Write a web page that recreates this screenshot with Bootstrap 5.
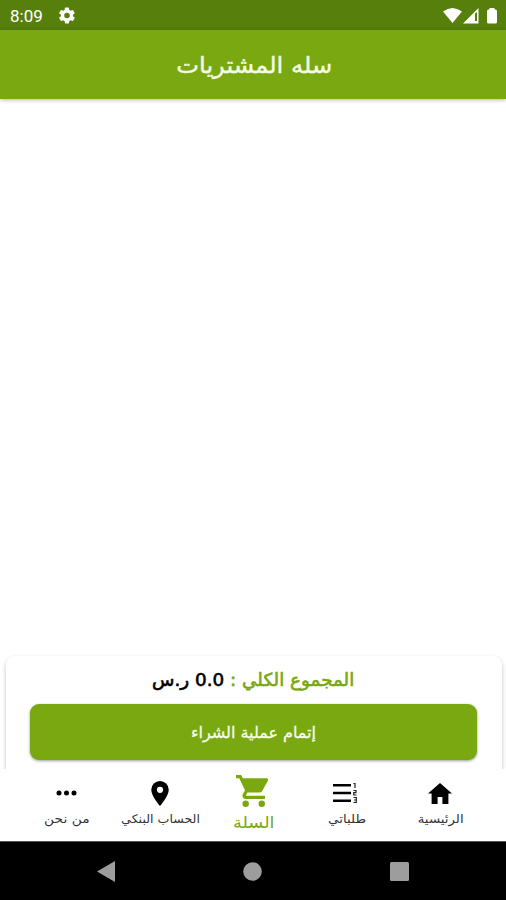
<!DOCTYPE html>
<html lang="ar" dir="rtl">
<head>
<meta charset="utf-8">
<meta name="viewport" content="width=device-width, initial-scale=1">
<title>سله المشتريات</title>
<link href="https://cdn.jsdelivr.net/npm/bootstrap@5.3.0/dist/css/bootstrap.min.css" rel="stylesheet">
<style>
:root{--leaf:#79a811;--leaf-dark:#577f0b}
body{font-family:"DejaVu Sans",sans-serif;background:#fff;line-height:1}
svg{display:block;flex:none}
.screen{height:900px;overflow:hidden}
.status{height:30px;background:var(--leaf-dark);font:17px/30px Roboto,sans-serif;padding:1px 8px 0 10px;flex:none}
.appbar{height:69px;background:var(--leaf);box-shadow:0 1px 4px rgba(0,0,0,.3);color:#f5fbe4;flex:none;padding-left:2px}
.appbar h1{font-size:23px;margin:0;line-height:71px;-webkit-text-stroke:.4px}
.sheet{height:113px;margin:0 4px 0 6px;padding:11px 25px 0 24px;border-radius:9px 9px 0 0;box-shadow:0 2px 4px rgba(0,0,0,.24);flex:none}
.total{font-size:18px;line-height:25px;height:37px;-webkit-text-stroke:.6px}
.leaf-text{color:var(--leaf)}
.pay{height:56px;border-radius:9px;background:var(--leaf)!important;color:#f8fde9!important;font-size:16px;box-shadow:0 1px 3px rgba(0,0,0,.4);padding:2px 0 0;border:0;-webkit-text-stroke:.3px}
.tabs{height:72px;background:#fff;padding:0 19px 0 20px;position:relative;flex:none}
.tab-item{flex:1 1 0;min-width:0;color:#000;text-decoration:none;font-size:12px}
.tab-icon{height:34px;margin-top:7px}
.tab-label{line-height:16px;color:#333;margin-top:1px}
.tab-item.active .tab-icon{margin:5px 2px 0 0}
.tab-item.active .tab-label{color:var(--leaf);font-size:16px;margin-top:7px}
.sys{height:59px;background:#000;border-top:1px solid #555;flex:none;padding:0 97px}
.fit{display:inline-block;white-space:nowrap}
.fit-title{transform:scaleX(1.05)}
.fit-total{transform:scaleX(1.02)}
.fit-a,.fit-b,.fit-c{transform:scaleX(1.11)}
.fit-d{transform:scaleX(1.05)}
.fit-e{transform:scaleX(1.15)}
</style>
</head>
<body>
<div class="screen d-flex flex-column">
  <div class="status d-flex align-items-center text-white" dir="ltr">
    <span>8:09</span>
    <svg class="ms-3" width="16" height="17" viewBox="2 2 20 20" fill="#fff"><path fill-rule="evenodd" d="M19.4 13a7.500 7.500 0 0 0 0-2l2.100-1.600a.5.5 0 0 0 .1-.6l-2-3.500a.5.5 0 0 0-.6-.2l-2.500 1a7.300 7.300 0 0 0-1.700-1l-.4-2.600a.5.5 0 0 0-.5-.4h-4a.5.5 0 0 0-.5.4L9 5.100a7.700 7.700 0 0 0-1.700 1l-2.500-1a.5.5 0 0 0-.6.2l-2 3.500a.5.5 0 0 0 .1.600L4.500 11a7.900 7.900 0 0 0 0 2l-2.200 1.600a.5.5 0 0 0-.1.600l2 3.500c.1.200.4.300.6.200l2.500-1a7.300 7.300 0 0 0 1.700 1l.4 2.600c0 .2.200.4.500.4h4c.3 0 .5-.2.500-.4l.4-2.600a7.700 7.700 0 0 0 1.700-1l2.500 1c.2.100.5 0 .6-.2l2-3.500a.5.5 0 0 0-.1-.6zM12 15.500a3.500 3.500 0 1 1 0-7 3.500 3.500 0 0 1 0 7z"/></svg>
    <svg class="ms-auto" width="55" height="18" viewBox="0 0 55 18" fill="#fff"><path d="M0 4.500Q9.500-2.500 19 4.500L9.500 16z"/><path fill-rule="evenodd" d="M35.500 1v15.500H20zM32 6.500V14h2V5z"/><path d="M46.500 1h5v1.500h1q1.500 0 1.500 1.500v11q0 1.500-1.500 1.500h-7q-1.500 0-1.500-1.500V4q0-1.500 1.500-1.500h1z"/></svg>
  </div>
  <header class="appbar text-center"><h1><span class="fit fit-title">سله المشتريات</span></h1></header>
  <main class="flex-grow-1"></main>
  <section class="sheet bg-white">
    <div class="total text-center"><span class="fit fit-total"><span class="leaf-text">المجموع الكلي :</span> <span class="text-black">0.0 ر.س</span></span></div>
    <button class="pay btn w-100"><span class="fit fit-pay">إتمام عملية الشراء</span></button>
  </section>
  <nav class="tabs d-flex">
    <a href="#" class="tab-item d-flex flex-column align-items-center"><span class="tab-icon d-flex align-items-center"><svg width="24" height="21" viewBox="0 0 24 21"><path d="M12 0L24 10.500h-3.600V21h-6v-7H9.600v7h-6V10.500H0z"/></svg></span><span class="tab-label fit fit-a">الرئيسية</span></a>
    <a href="#" class="tab-item d-flex flex-column align-items-center"><span class="tab-icon d-flex align-items-center pe-1"><svg width="26" height="22" viewBox="0 0 26 22"><path d="M1 2h18v2.600H1zM1 9.700h18v2.600H1zM1 17.400h18V20H1z"/><path d="M21.500 1.500h1.500V6M21.500 8.500H24v2.200h-2.300V13h2.800M21.500 15.500h2.800v5h-2.800M22 18h2" fill="none" stroke="#222" stroke-width="1.200"/></svg></span><span class="tab-label fit fit-b">طلباتي</span></a>
    <a href="#" class="tab-item active d-flex flex-column align-items-center"><span class="tab-icon d-flex align-items-center"><svg width="33" height="32" viewBox="1 2 20.500 20" preserveAspectRatio="none" fill="#79a811"><path d="M7 18a2 2 0 1 0 0 4 2 2 0 0 0 0-4zM1 2v2h2l3.600 7.600-1.350 2.450C4.520 15.370 5.480 17 7 17h12v-2H7.420a.25.25 0 0 1-.25-.25L8.100 13h7.450c.75 0 1.410-.41 1.750-1.030L20.880 5.480A1 1 0 0 0 20 4H5.210l-.94-2zM17 18a2 2 0 1 0 0 4 2 2 0 0 0 0-4z"/></svg></span><span class="tab-label fit fit-c">السلة</span></a>
    <a href="#" class="tab-item d-flex flex-column align-items-center"><span class="tab-icon d-flex align-items-center"><svg width="18" height="25" viewBox="5 2 14 20"><path fill-rule="evenodd" d="M12 2a7 7 0 0 0-7 7c0 5.250 7 13 7 13s7-7.750 7-13a7 7 0 0 0-7-7zm0 9.500a2.500 2.500 0 1 1 0-5 2.500 2.500 0 0 1 0 5z"/></svg></span><span class="tab-label fit fit-d">الحساب البنكي</span></a>
    <a href="#" class="tab-item d-flex flex-column align-items-center"><span class="tab-icon d-flex align-items-center"><svg width="21" height="6" viewBox="0 0 21 6"><circle cx="3" cy="3" r="2.500"/><circle cx="10.500" cy="3" r="2.500"/><circle cx="18" cy="3" r="2.500"/></svg></span><span class="tab-label fit fit-e">من نحن</span></a>
  </nav>
  <div class="sys d-flex align-items-center justify-content-between" dir="ltr">
    <svg width="18" height="21" viewBox="0 0 18 21" fill="#9d9d9d"><path d="M18 0v21L0 10.500z"/></svg>
    <svg width="19" height="19" viewBox="0 0 19 19" fill="#9d9d9d"><circle cx="9.500" cy="9.500" r="9.300"/></svg>
    <svg width="19" height="19" viewBox="0 0 19 19" fill="#9d9d9d"><rect width="19" height="19" rx="1.500"/></svg>
  </div>
</div>
<script src="https://cdn.jsdelivr.net/npm/bootstrap@5.3.0/dist/js/bootstrap.bundle.min.js"></script>
</body>
</html>
